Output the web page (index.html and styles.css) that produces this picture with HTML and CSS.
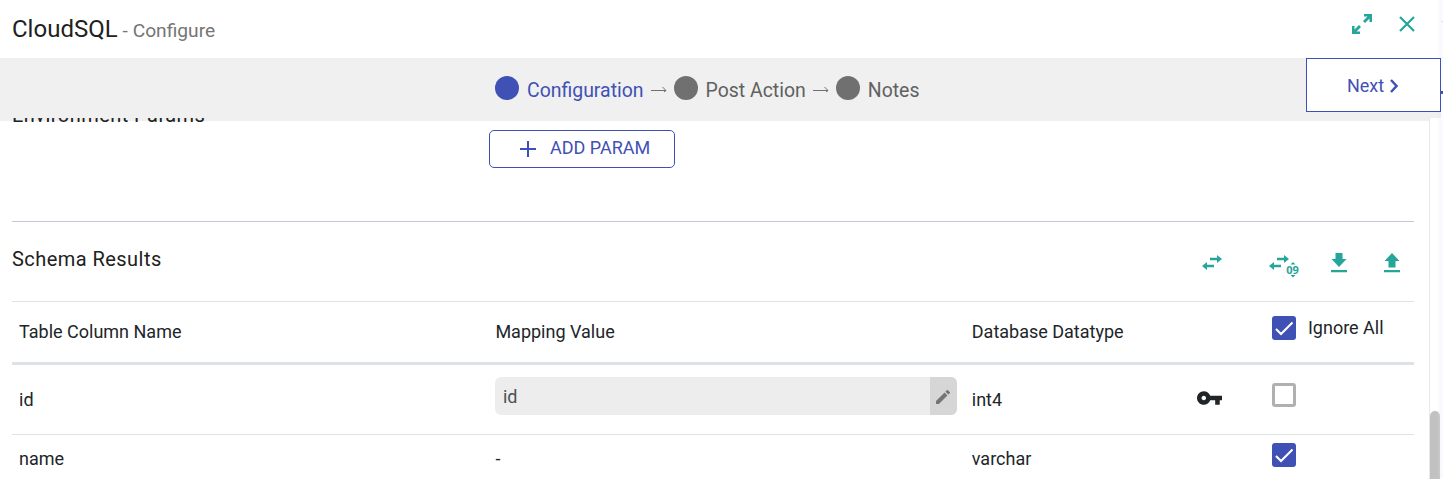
FILE: index.html
```html
<!DOCTYPE html>
<html lang="en">
<head>
  <meta charset="UTF-8" />
  <title>CloudSQL - Configure</title>
  <link rel="stylesheet" href="styles.css">
</head>
<body>

  <div class="panel">
    <header class="header">
      <h1>CloudSQL</h1>
      <span class="subtitle">- Configure</span>
      <div class="header-actions">
        <svg class="expand" viewBox="0 0 22 22" width="22" height="22">
          <path d="M13 1h8v8h-2.500V5.500l-4.500 4.500-2-2L16.500 3.500H13zM1 13h2.500v3.500l4.500-4.500 2 2L5.500 18.500H9V21H1z" />
        </svg>
        <svg class="close" viewBox="0 0 16 16" width="16" height="16">
          <path d="M1 1l14 14M15 1L1 15" />
        </svg>
      </div>
    </header>

    <nav class="steps">
      <span class="dot active"></span>
      <span class="step active">Configuration</span>
      <svg class="arrow" viewBox="0 0 16 8" width="16" height="8"><path d="M0 4.500h15M11.500 1l3.500 3.500-2 1.500" /></svg>
      <span class="dot"></span>
      <span class="step">Post Action</span>
      <svg class="arrow" viewBox="0 0 16 8" width="16" height="8"><path d="M0 4.500h15M11.500 1l3.500 3.500-2 1.500" /></svg>
      <span class="dot"></span>
      <span class="step">Notes</span>
      <button class="next-btn">Next
        <svg viewBox="0 0 8 14" width="8" height="14"><path d="M1 1l5.500 6L1 13" /></svg>
      </button>
    </nav>

    <div class="body">
      <main class="content">
        <section class="params">
          <h2>Environment Params</h2>
          <button class="add-btn">
            <svg viewBox="0 0 16 16" width="16" height="16"><path d="M8 0v16M0 8h16" /></svg>
            <span>ADD PARAM</span>
          </button>
        </section>

        <section class="schema-head">
          <h2>Schema Results</h2>
          <div class="tools">
            <svg class="swap" viewBox="0 0 20 15" width="20" height="15">
              <path d="M8 2.700h7V0l5 4-5 4V5.300H8zM12 9.700H5V7l-5 4 5 4v-2.700h7z" />
            </svg>
            <svg class="swap-num" viewBox="0 0 30 23" width="30" height="23">
              <path d="M8 2.700h7V0l5 4-5 4V5.300H8zM12 9.700H5V7l-5 4 5 4v-2.700h7zM24 7l2.500 2.500h-5zM24 22.500l2.500-2.500h-5z" />
              <text x="17.300" y="19">09</text>
            </svg>
            <svg class="download" viewBox="0 0 16 20" width="16" height="20">
              <path d="M4.500 0h7v6h4L8 14 .500 6h4zM0 17h16v2.300H0z" />
            </svg>
            <svg class="upload" viewBox="0 0 16 20" width="16" height="20">
              <path d="M8 0l7.500 8h-4v6.500h-7V8h-4zM0 17h16v2.300H0z" />
            </svg>
          </div>
        </section>

        <div class="table">
          <div class="row head">
            <div>Table Column Name</div>
            <div>Mapping Value</div>
            <div>Database Datatype</div>
            <div></div>
            <label class="ignore">
              <span class="check on"><svg viewBox="0 0 24 24" width="24" height="24"><path d="M4 13l5 5L20.500 6.500" /></svg></span>
              Ignore All
            </label>
          </div>
          <div class="row first">
            <div>id</div>
            <div class="mapping">
              <span class="value">id</span>
              <span class="edit">
                <svg viewBox="0 0 14 14" width="14" height="14"><path d="M0 11.100V14h2.900l8.600-8.600-2.900-2.900zM13.800 3.200c.3-.3.3-.8 0-1.100L11.900.2c-.3-.3-.8-.3-1.100 0L9.400 1.700l2.900 2.900z" /></svg>
              </span>
            </div>
            <div>int4</div>
            <div class="key">
              <svg viewBox="1 6 22 12" width="25" height="14"><path d="M12.650 10C11.830 7.670 9.610 6 7 6c-3.310 0-6 2.690-6 6s2.690 6 6 6c2.610 0 4.830-1.670 5.650-4H17v4h4v-4h2v-4H12.650zM7 14c-1.100 0-2-.9-2-2s.9-2 2-2 2 .9 2 2-.9 2-2 2z" /></svg>
            </div>
            <div class="ignore"><span class="check"></span></div>
          </div>
          <div class="row">
            <div>name</div>
            <div>-</div>
            <div>varchar</div>
            <div></div>
            <div class="ignore">
              <span class="check on"><svg viewBox="0 0 24 24" width="24" height="24"><path d="M4 13l5 5L20.500 6.500" /></svg></span>
            </div>
          </div>
        </div>
      </main>
      <div class="scrollbar"><div class="thumb"></div></div>
    </div>
  </div>

  <div class="backdrop"><span class="rule"></span><span class="mark"></span></div>

</body>
</html>
```

FILE: styles.css
```css
* {
  box-sizing: border-box;
}

body {
  margin: 0;
  display: flex;
  height: 479px;
  overflow: hidden;
  font-family: Roboto, sans-serif;
  font-size: 18px;
  color: #212529;
  background: #fff;
}

h1, h2 {
  margin: 0;
  font-weight: normal;
}

.panel {
  width: 1441px;
  display: flex;
  flex-direction: column;
}

.header {
  height: 58px;
  padding: 0 26px 0 12px;
  display: flex;
  align-items: baseline;
  flex-shrink: 0;
}

.header h1 {
  font-size: 24px;
  line-height: 58px;
  color: #212121;
}

.subtitle {
  margin-left: 5px;
  font-size: 19.2px;
  color: #757575;
}

.header-actions {
  align-self: flex-start;
  margin: 13px 0 0 auto;
  display: flex;
  align-items: center;
  gap: 26px;
}

.expand {
  fill: #26a69a;
}

.close {
  fill: none;
  stroke: #26a69a;
  stroke-width: 2.2;
}

.steps {
  height: 63px;
  padding-left: 495px;
  display: flex;
  align-items: center;
  flex-shrink: 0;
  background: #f0f0f0;
  font-size: 19.45px;
  color: #616161;
}

.dot {
  width: 24px;
  height: 24px;
  margin: 0 8px 4px 0;
  border-radius: 50%;
  background: #707070;
}

.dot.active {
  background: #3f51b5;
}

.step {
  padding-top: 2px;
}

.step.active {
  color: #3f51b5;
}

.arrow {
  margin: 0 7px;
  fill: none;
  stroke: #707070;
}

.next-btn {
  align-self: flex-start;
  width: 135px;
  height: 54px;
  margin-left: auto;
  padding: 0 2px 0 0;
  display: flex;
  align-items: center;
  justify-content: center;
  gap: 6px;
  position: relative;
  z-index: 1;
  border: 1px solid #3f51b5;
  background: #fff;
  color: #3f51b5;
  font: 18px Roboto, sans-serif;
}

.next-btn svg {
  margin-top: 2px;
  fill: none;
  stroke: #3f51b5;
  stroke-width: 2.4;
}

.body {
  height: 361px;
  margin-top: -3px;
  display: flex;
  overflow: hidden;
}

.content {
  width: 1402px;
  margin-left: 12px;
}

.content h2 {
  font-size: 20px;
  letter-spacing: 0.45px;
  color: #212121;
}

.params {
  height: 104px;
  display: grid;
  grid-template-columns: 477px 186px;
  align-items: start;
  border-bottom: 1px solid #c5c7d3;
}

.params h2 {
  margin-top: -15px;
}

.add-btn {
  height: 38px;
  margin-top: 12px;
  padding: 0 0 0 30px;
  display: flex;
  align-items: center;
  gap: 14px;
  border: 1px solid #3f51b5;
  border-radius: 5px;
  background: #fff;
  color: #3f51b5;
  font: 18px Roboto, sans-serif;
}

.add-btn span {
  margin-bottom: 3px;
}

.add-btn svg {
  stroke: #3f51b5;
  stroke-width: 2;
}

.schema-head {
  height: 79px;
  padding-top: 25px;
  display: flex;
  justify-content: space-between;
  align-items: flex-start;
}

.tools {
  margin: 6px 14.5px 0 0;
  display: flex;
  align-items: flex-start;
  fill: #26a69a;
}

.swap {
  margin: 2px 47.5px 0 0;
}

.swap-num {
  margin: 2px 32px 0 0;
}

.swap-num text {
  font: bold 11px "Open Sans", sans-serif;
}

.download {
  margin-right: 36.5px;
}

.row {
  display: grid;
  grid-template-columns: 476.4px 476.4px 225.2px 75px 149px;
  height: 70px;
  padding-top: 13px;
  border-top: 1px solid #dee2e6;
}

.row > div:not(.mapping):not(.ignore) {
  padding-left: 7px;
}

.row.head {
  height: 61px;
  padding-top: 19px;
}

.row.first {
  height: 72px;
  padding-top: 24px;
  border-top: 3px solid #dee2e6;
}

.mapping {
  display: flex;
  width: 462px;
  height: 38px;
  margin: -12px 0 0 6.6px;
  border-radius: 6px;
  overflow: hidden;
  background: #ededed;
  color: #495057;
}

.value {
  flex: 1;
  padding: 9px 8px;
}

.edit {
  width: 27px;
  display: flex;
  align-items: center;
  justify-content: center;
  padding: 2px 1px 0 0;
  background: #d6d6d6;
  fill: #757575;
}

.row > .key:not(.mapping):not(.ignore) {
  margin-top: -1px;
  padding-left: 7.500px;
  fill: #212529;
}

.ignore {
  display: flex;
  align-items: flex-start;
  gap: 12px;
  margin-top: -5px;
  padding-left: 7px;
}

.row.head .ignore {
  margin-top: -4px;
}

.row.first .ignore {
  margin-top: -6px;
}

.check {
  width: 24px;
  height: 24px;
  flex-shrink: 0;
  border: 3px solid #b0b0b0;
  border-radius: 3px;
}

.row.head .check {
  margin-top: -1px;
}

.check.on {
  border: none;
  background: #3f51b5;
}

.check svg {
  display: block;
  fill: none;
  stroke: #fff;
  stroke-width: 2.1;
}

.scrollbar {
  width: 12px;
  margin-left: 15px;
  padding: 293px 1px 0 0;
  background: #fff;
  border-left: 1px solid #e8e8e8;
}

.thumb {
  height: 80px;
  border-radius: 5px;
  background: #c1c1c1;
}

.backdrop {
  width: 2px;
  background: #fafaff;
  box-shadow: 0 0 4px #e4e4f4;
}

.rule,
.mark {
  display: block;
  height: 1px;
  margin-top: 21px;
  background: #e0e0e6;
}

.mark {
  height: 3px;
  margin-top: 69px;
  background: #3f51b5;
}
```
